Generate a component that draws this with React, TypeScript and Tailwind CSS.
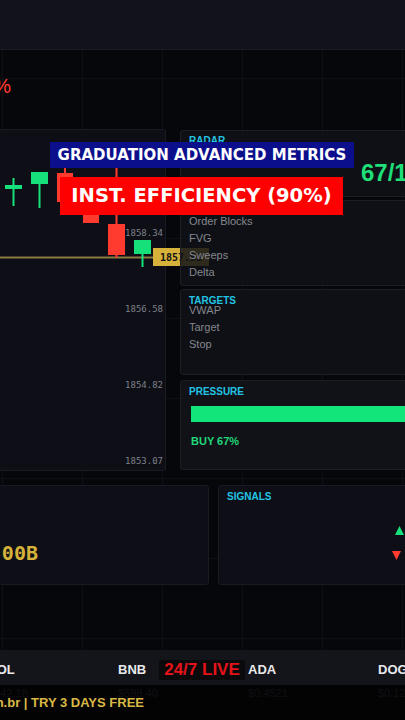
import { ReactElement } from "react";

const TICKERS = [
	{ sym: "SOL", price: "$142.18" },
	{ sym: "BNB", price: "$598.40" },
	{ sym: "ADA", price: "$0.4521" },
	{ sym: "DOGE", price: "$0.1274" },
];

const AXIS = ["1858.34", "1856.58", "1854.82", "1853.07"];

function Candles(): ReactElement {
	const up = "#16e07a";
	const down = "#ff3b30";
	return (
		<svg className="absolute left-0 top-0" width="165" height="340" viewBox="0 0 165 340">
			{/* last price line */}
			<line x1="0" y1="127.5" x2="153" y2="127.5" stroke="#8c7a44" strokeWidth="2" />
			<rect x="12.5" y="48" width="2" height="28" fill={up} />
			<rect x="5" y="55" width="17" height="4" fill={up} />
			<rect x="38.5" y="42" width="2" height="36" fill={up} />
			<rect x="31" y="42" width="17" height="12" fill={up} />
			<rect x="64" y="38" width="2" height="6" fill={down} />
			<rect x="57" y="43" width="16" height="29" fill={down} />
			<rect x="83" y="65" width="16" height="28" fill={down} />
			<rect x="115.5" y="38" width="2" height="90" fill={down} />
			<rect x="108" y="94" width="17" height="31" fill={down} />
			<rect x="141.5" y="124" width="2" height="13" fill={up} />
			<rect x="134" y="110" width="17" height="14" fill={up} />
		</svg>
	);
}

function ListPanel({ title, items, h }: { title: string; items: string[]; h: string }): ReactElement {
	return (
		<div className={`${h} rounded-[3px] border border-[#1c1d25] bg-[#111218]/85 px-[8px] pt-[6px]`}>
			<div className="text-[10px] font-bold leading-[10px] text-[#22c3e3]">{title}</div>
			<ul className="-mt-[4px] text-[11px] leading-[17px] text-[#85878f]">
				{items.map((item) => (
					<li key={item}>{item}</li>
				))}
			</ul>
		</div>
	);
}

export default function App(): ReactElement {
	return (
		<div className="relative h-[720px] w-[405px] overflow-hidden bg-[#06070b] bg-[linear-gradient(to_right,#0f1017_1px,transparent_1px),linear-gradient(to_bottom,#0f1017_1px,transparent_1px)] bg-[size:80px_80px] bg-[position:2px_78px] font-['Liberation_Sans',Arial,sans-serif]">
			<div className="h-[50px] border-b border-[#1a1b23] bg-[#12131a]" />

			<div className="h-[78px] pt-[24px]">
				<div className="flex w-[11px] justify-end">
					<span className="whitespace-nowrap text-[20px] leading-[24px] text-[#ff3b30]">-1.24%</span>
				</div>
			</div>

			{/* chart + side panels */}
			<div className="flex items-start gap-[14px]">
				<div className="relative -ml-px mt-px h-[342px] w-[167px] shrink-0 rounded-[3px] border border-[#191a22] bg-[#0e0f16]">
					<Candles />
					<div className="absolute right-[2px] top-[96px] flex flex-col items-end gap-[62px] font-['DejaVu_Sans_Mono',monospace] text-[9px] leading-[14px] text-[#7d8089]">
						{AXIS.map((p) => (
							<span key={p}>{p}</span>
						))}
					</div>
					<div className="absolute left-[153px] top-[118px] flex h-[18px] w-[56px] items-center bg-[#d6b23a] pl-[7px] font-['DejaVu_Sans_Mono',monospace] text-[10px] font-bold text-[#111]">
						1857.52
					</div>
				</div>

				<div className="relative z-10 mt-[2px] flex w-[260px] shrink-0 flex-col">
					<div className="h-[67px] rounded-[3px] border border-[#1c1d25] bg-[#111218]/85 px-[8px] pt-[4px]">
						<div className="text-[10px] font-bold leading-[12px] text-[#22c3e3]">RADAR</div>
						<div className="ml-[172px] mt-[12px] whitespace-nowrap text-[24px] font-bold leading-[28px] text-[#1fdf78]">
							67/100
						</div>
					</div>
					<div className="mt-[3px]">
						<ListPanel title="STRUCTURE" items={["Order Blocks", "FVG", "Sweeps", "Delta"]} h="h-[86px]" />
					</div>
					<div className="mt-[3px]">
						<ListPanel title="TARGETS" items={["VWAP", "Target", "Stop"]} h="h-[86px]" />
					</div>
					<div className="mt-[5px] h-[90px] rounded-[3px] border border-[#1c1d25] bg-[#111218] px-[8px] pt-[6px]">
						<div className="text-[10px] font-bold leading-[10px] text-[#22c3e3]">PRESSURE</div>
						<div className="ml-[2px] mt-[9px] h-[16px] bg-[#12e57a]" />
						<div className="ml-[2px] mt-[13px] text-[11px] font-bold leading-[13px] text-[#1fd87a]">BUY 67%</div>
					</div>
				</div>
			</div>

			{/* volume + signals */}
			<div className="mt-[14px] flex gap-[9px]">
				<div className="-ml-px h-[100px] w-[210px] shrink-0 rounded-[3px] border border-[#191a22] bg-[#0e0f16] pt-[55px]">
					<div className="flex w-[38px] justify-end">
						<span className="whitespace-nowrap font-['DejaVu_Sans_Mono',monospace] text-[20px] font-bold leading-[24px] text-[#d6b23a]">
							$1.00B
						</span>
					</div>
				</div>
				<div className="h-[100px] w-[220px] shrink-0 rounded-[3px] border border-[#191a22] bg-[#0e0f16] pl-[8px] pt-[6px]">
					<div className="text-[10px] font-bold leading-[10px] text-[#22c3e3]">SIGNALS</div>
					<svg className="ml-[168px] mt-[24px]" width="9" height="9" viewBox="0 0 9 9">
						<path d="M4.5 0 L9 9 L0 9 Z" fill="#16e07a" />
					</svg>
					<svg className="ml-[165px] mt-[16px]" width="9" height="9" viewBox="0 0 9 9">
						<path d="M0 0 L9 0 L4.5 9 Z" fill="#ff3b30" />
					</svg>
				</div>
			</div>

			{/* ticker */}
			<div className="mt-[65px] h-[35px] bg-[#14151b]">
				<div className="-ml-[12px] flex pt-[12px]">
					{TICKERS.map((t) => (
						<div key={t.sym} className="w-[130px] shrink-0">
							<div className="text-[13px] font-bold leading-[15px] text-[#e9e9ec]">{t.sym}</div>
							<div className="mt-[10px] text-[11px] leading-[13px] text-[#0f1014]">{t.price}</div>
						</div>
					))}
				</div>
			</div>

			<div className="flex h-[35px] items-center bg-[#030304]">
				<div className="flex w-[144px] justify-end">
					<span className="whitespace-nowrap text-[13px] font-bold text-[#d8b845]">fibotron.br | TRY 3 DAYS FREE</span>
				</div>
			</div>

			{/* overlays */}
			<div className="absolute left-[159px] top-[660px] z-20 flex h-[20px] w-[86px] items-center justify-center bg-[#0a0a0c] text-[17px] font-bold text-[#e5131a]">
				24/7 LIVE
			</div>
			<div className="absolute left-[50px] top-[142px] z-20 flex h-[26px] w-[304px] items-center justify-center bg-[#0b0f8c] font-['DejaVu_Sans',sans-serif] text-[15px] font-bold text-white">
				GRADUATION ADVANCED METRICS
			</div>
			<div className="absolute left-[60px] top-[177px] z-20 flex h-[38px] w-[283px] items-center justify-center bg-[#ff0000] font-['DejaVu_Sans',sans-serif] text-[19.5px] font-bold text-white">
				INST. EFFICIENCY (90%)
			</div>
		</div>
	);
}
